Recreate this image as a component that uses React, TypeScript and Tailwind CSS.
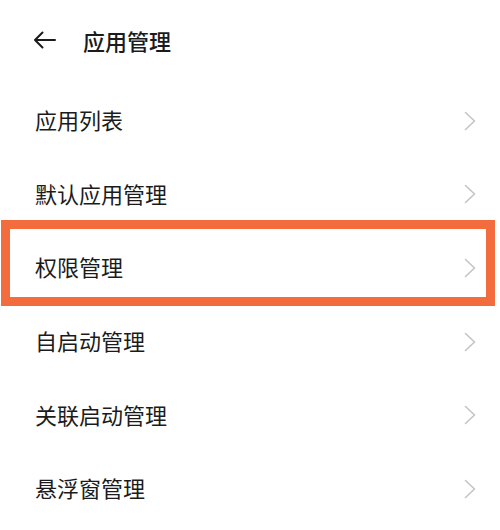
const ITEMS = [
  "应用列表",
  "默认应用管理",
  "权限管理",
  "自启动管理",
  "关联启动管理",
  "悬浮窗管理",
];

function Chevron() {
  return (
    <svg className="h-[20px] w-[12px]" viewBox="0 0 12 20" fill="none">
      <path d="M1.5 1.5 L10.5 10 L1.5 18.5" stroke="#c4c4c4" strokeWidth={1.6} strokeLinecap="round" strokeLinejoin="round" />
    </svg>
  );
}

export default function App() {
  return (
    <div
      className="h-[530px] w-[500px] overflow-hidden bg-white text-[#1b1b1b]"
      style={{ fontFamily: '"Noto Sans CJK SC", "Noto Sans", sans-serif' }}
    >
      {/* Header */}
      <div className="flex h-[84px] items-center pb-[5px] pl-[33px]">
        <svg className="h-[18px] w-[23px]" viewBox="0 0 23 18" fill="none">
          <path d="M22 9 H2 M9.5 1.5 L2 9 L9.5 16.5" stroke="#1b1b1b" strokeWidth={2} strokeLinecap="round" strokeLinejoin="round" />
        </svg>
        <span className="ml-[27px] text-[22px] font-medium leading-none">应用管理</span>
      </div>

      {/* List */}
      <div>
        {ITEMS.map((item, i) => (
          <div key={item} className="relative flex h-[73.6px] items-center justify-between pl-[35px] pr-[24px]">
            <span className="pb-[3px] text-[22px] leading-none">{item}</span>
            <Chevron />
            {i === 2 && (
              <div className="pointer-events-none absolute top-[-11px] right-[5px] bottom-[-1px] left-[1px] border-[9px] border-[#f36c3d]" />
            )}
          </div>
        ))}
      </div>
    </div>
  );
}
